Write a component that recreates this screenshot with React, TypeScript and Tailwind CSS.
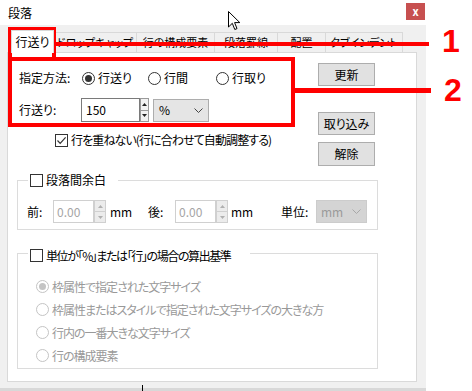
import React from "react";

function Radio({ checked = false, disabled = false }: { checked?: boolean; disabled?: boolean }) {
  return (
    <span
      className={
        disabled
          ? "flex h-[13px] w-[13px] shrink-0 items-center justify-center rounded-full border border-[#c4c4c4] bg-white"
          : "flex h-[13px] w-[13px] shrink-0 items-center justify-center rounded-full border border-[#333333] bg-white"
      }
    >
      {checked && (
        <span className={disabled ? "h-[7px] w-[7px] rounded-full bg-[#c4c4c4]" : "h-[7px] w-[7px] rounded-full bg-[#333333]"} />
      )}
    </span>
  );
}

function Checkbox({ checked = false }: { checked?: boolean }) {
  return (
    <span className="flex h-[13px] w-[13px] shrink-0 items-center justify-center border border-[#333333] bg-white">
      {checked && (
        <svg width="11" height="11" viewBox="0 0 11 11">
          <path d="M1.5 5.5 L4.2 8.4 L9.6 2.4" fill="none" stroke="#333333" strokeWidth="1.2" />
        </svg>
      )}
    </span>
  );
}

function Tri({ up, color }: { up?: boolean; color: string }) {
  return (
    <svg width="5" height="3" viewBox="0 0 5 3">
      <path d={up ? "M0 3 L2.5 0 L5 3 Z" : "M0 0 L2.5 3 L5 0 Z"} fill={color} />
    </svg>
  );
}

function Spinner({ disabled = false }: { disabled?: boolean }) {
  if (disabled) {
    return (
      <div className="flex h-[23px] w-[12px] flex-col border border-[#d0d0d0] bg-[#ececec]">
        <div className="flex flex-1 items-center justify-center border-b border-[#d0d0d0]">
          <Tri up color="#b0b0b0" />
        </div>
        <div className="flex flex-1 items-center justify-center">
          <Tri color="#b0b0b0" />
        </div>
      </div>
    );
  }
  return (
    <div className="flex h-[24px] w-[9px] flex-col border border-[#9a9a9a] bg-[#f2f2f2]">
      <div className="flex flex-1 items-center justify-center border-b border-[#9a9a9a]">
        <Tri up color="#222222" />
      </div>
      <div className="flex flex-1 items-center justify-center">
        <Tri color="#222222" />
      </div>
    </div>
  );
}

function Chevron({ color }: { color: string }) {
  return (
    <svg width="9" height="5" viewBox="0 0 9 5">
      <path d="M0.5 0.5 L4.5 4.5 L8.5 0.5" fill="none" stroke={color} strokeWidth="1" />
    </svg>
  );
}

function Button({ label, cls }: { label: string; cls: string }) {
  return (
    <div className={"flex w-[57px] items-center justify-center border border-[#adadad] bg-[#e1e1e1] text-[12px] text-black " + cls}>
      {label}
    </div>
  );
}

export default function App() {
  return (
    <div className="relative h-[391px] w-[472px] overflow-hidden bg-white font-['Noto_Sans_CJK_JP',sans-serif] text-[12px] leading-none text-black [font-feature-settings:'palt'_1] [font-variant-east-asian:proportional-width]">
      <div className="flex h-full w-[426px] flex-col bg-[#f0f0f0]">
        {/* title bar */}
        <div className="flex h-[25px] items-start justify-between bg-white pl-[8px] pr-[1px]">
          <span className="mt-[7px] text-[12px]">段落</span>
          <div className="mt-[3px] flex h-[17px] w-[19px] items-center justify-center bg-[#c75050] text-[11px] font-bold text-white">
            x
          </div>
        </div>

        {/* tabs */}
        <div className="flex h-[27px] items-end pl-[11px]">
          <div className="relative z-10 -mb-[1px] flex h-[23px] w-[43px] items-center justify-center border border-b-0 border-[#d9d9d9] bg-white">
            行送り
          </div>
          <div className="flex h-[20px] w-[83px] items-center justify-center overflow-hidden whitespace-nowrap border border-l-0 border-b-0 border-[#d9d9d9] text-[11px]">
            ドロップキャップ
          </div>
          <div className="flex h-[20px] w-[78px] items-center justify-center overflow-hidden whitespace-nowrap border border-l-0 border-b-0 border-[#d9d9d9] text-[11px]">
            行の構成要素
          </div>
          <div className="flex h-[20px] w-[63px] items-center justify-center overflow-hidden whitespace-nowrap border border-l-0 border-b-0 border-[#d9d9d9] text-[11px]">
            段落罫線
          </div>
          <div className="flex h-[20px] w-[48px] items-center justify-center overflow-hidden whitespace-nowrap border border-l-0 border-b-0 border-[#d9d9d9] text-[11px]">
            配置
          </div>
          <div className="flex h-[20px] w-[77px] items-center justify-center overflow-hidden whitespace-nowrap border border-l-0 border-b-0 border-[#d9d9d9] text-[11px]">
            タブインデント
          </div>
        </div>

        {/* panel */}
        <div className="ml-[7px] flex h-[330px] w-[410px] flex-col border border-[#d9d9d9] bg-white">
          <div className="flex pt-[10px]">
            {/* left column */}
            <div className="flex w-[310px] flex-col pl-[11px] pt-[3px]">
              <div className="flex h-[24px] items-center">
                <span className="w-[63px]">指定方法：</span>
                <div className="flex w-[66px] items-center gap-[3px]">
                  <Radio checked />
                  <span>行送り</span>
                </div>
                <div className="flex w-[68px] items-center gap-[3px]">
                  <Radio />
                  <span>行間</span>
                </div>
                <div className="flex items-center gap-[3px]">
                  <Radio />
                  <span>行取り</span>
                </div>
              </div>
              <div className="mt-[8px] flex h-[24px] items-center">
                <span className="w-[62px]">行送り：</span>
                <div className="flex h-[24px] w-[59px] items-center border border-[#7a7a7a] pl-[4px]">150</div>
                <Spinner />
                <div className="ml-[4px] flex h-[23px] w-[56px] items-center justify-between border border-[#adadad] bg-[#e5e5e5] pl-[5px] pr-[5px]">
                  <span>%</span>
                  <Chevron color="#444444" />
                </div>
              </div>
              <div className="mt-[6px] flex h-[24px] items-center gap-[3px] pl-[36px]">
                <Checkbox checked />
                <span className="tracking-[-0.9px]">行を重ねない(行に合わせて自動調整する)</span>
              </div>
            </div>
            {/* right column */}
            <div className="flex flex-col">
              <Button label="更新" cls="h-[23px]" />
              <Button label="取り込み" cls="mt-[26px] h-[23px]" />
              <Button label="解除" cls="mt-[7px] h-[24px]" />
            </div>
          </div>

          {/* group 1 */}
          <fieldset className="ml-[9px] mt-[7px] w-[361px] border border-[#dcdcdc] pb-[6px] pl-[9px]">
            <legend className="ml-[1px] flex h-[14px] items-center gap-[3px] pl-[2px] pr-[12px]">
              <Checkbox />
              <span>段落間余白</span>
            </legend>
            <div className="mt-[13px] flex h-[23px] items-center">
              <span className="w-[26px]">前：</span>
              <div className="flex h-[23px] w-[41px] items-center border border-[#d0d0d0] pl-[3px] text-[#a5a5a5]">0.00</div>
              <Spinner disabled />
              <span className="ml-[4px] w-[38px]">mm</span>
              <span className="w-[27px]">後：</span>
              <div className="flex h-[23px] w-[41px] items-center border border-[#d0d0d0] pl-[3px] text-[#a5a5a5]">0.00</div>
              <Spinner disabled />
              <span className="ml-[3px] w-[50px]">mm</span>
              <span className="w-[35px]">単位：</span>
              <div className="flex h-[23px] w-[51px] items-center justify-between border border-[#cccccc] bg-[#d4d4d4] pl-[4px] pr-[5px] text-[#9a9a9a]">
                <span>mm</span>
                <Chevron color="#a8a8a8" />
              </div>
            </div>
          </fieldset>

          {/* group 2 */}
          <fieldset className="ml-[9px] mt-[13px] w-[361px] border border-[#dcdcdc] pb-[1px] pl-[18px]">
            <legend className="-ml-[8px] flex h-[20px] items-end gap-[3px] pb-[1px] pl-[2px] pr-[20px]">
              <Checkbox />
              <span className="tracking-[-1.4px]">単位が「%」または「行」の場合の算出基準</span>
            </legend>
            <div className="mt-[12px] flex flex-col text-[#999999] tracking-[-1px]">
              <div className="flex h-[23px] items-center gap-[3px]">
                <Radio checked disabled />
                <span>枠属性で指定された文字サイズ</span>
              </div>
              <div className="flex h-[23px] items-center gap-[3px]">
                <Radio disabled />
                <span>枠属性またはスタイルで指定された文字サイズの大きな方</span>
              </div>
              <div className="flex h-[23px] items-center gap-[3px]">
                <Radio disabled />
                <span>行内の一番大きな文字サイズ</span>
              </div>
              <div className="flex h-[23px] items-center gap-[3px]">
                <Radio disabled />
                <span>行の構成要素</span>
              </div>
            </div>
          </fieldset>
        </div>
        <div className="mt-auto h-[3px] bg-[#d8d8d8]" />
      </div>

      {/* mouse cursor */}
      <svg className="absolute left-[228px] top-[11px]" width="13" height="20" viewBox="0 0 13 20">
        <path d="M0.5 0.5 L0.5 16 L4.3 12.3 L6.8 18.5 L9 17.6 L6.6 11.6 L11.8 11.6 Z" fill="white" stroke="black" strokeWidth="1" />
      </svg>
      <div className="absolute left-[142px] top-[385px] h-[6px] w-[1px] bg-black" />

      {/* annotations */}
      <div className="absolute left-[8px] top-[27px] h-[34px] w-[48px] border-[4px] border-[#ff0000]" />
      <div className="absolute left-[8px] top-[57px] h-[70px] w-[287px] border-[4px] border-[#ff0000]" />
      <div className="absolute left-[56px] top-[42px] h-[4px] w-[373px] bg-[#ff0000]" />
      <div className="absolute left-[294px] top-[88px] h-[5px] w-[137px] bg-[#ff0000]" />
      <div className="absolute left-[442px] top-[25px] font-['Liberation_Sans',sans-serif] text-[32px] font-bold leading-none text-[#ff0000]">
        1
      </div>
      <div className="absolute left-[444px] top-[74px] font-['Liberation_Sans',sans-serif] text-[32px] font-bold leading-none text-[#ff0000]">
        2
      </div>
    </div>
  );
}
